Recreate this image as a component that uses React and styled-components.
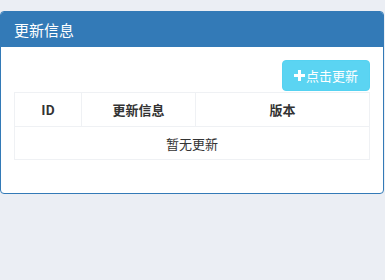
import React from "react";
import styled, { createGlobalStyle } from "styled-components";

const Global = createGlobalStyle`
  html, body { margin: 0; padding: 0; background: #ebeef4; }
  body { font-family: "Liberation Sans", "Noto Sans CJK SC", sans-serif; color: #333; }
`;

const Page = styled.div`
  padding: 11px 1px 0 0;
`;

const Panel = styled.div`
  background: #fff;
  border: 1px solid #337ab7;
  border-radius: 4px;
  overflow: hidden;
`;

const Heading = styled.div`
  background: #337ab7;
  color: #fff;
  height: 35px;
  display: flex;
  align-items: center;
  padding: 0 13px;
  font-size: 15px;
  font-family: "Noto Sans CJK SC", sans-serif;
`;

const Body = styled.div`
  padding: 13px 13px 33px;
  display: flex;
  flex-direction: column;
`;

const Toolbar = styled.div`
  display: flex;
  justify-content: flex-end;
  margin-bottom: 1px;
`;

const Button = styled.button`
  display: flex;
  align-items: center;
  gap: 1px;
  height: 31px;
  width: 88px;
  justify-content: center;
  background: #5bd4f2;
  border: 1px solid #55d2f1;
  border-radius: 4px;
  color: #fff;
  font-size: 13px;
  font-family: "Noto Sans CJK SC", sans-serif;
  padding: 0;
`;

const Table = styled.table`
  width: 100%;
  border-collapse: collapse;
  font-family: "Noto Sans CJK SC", sans-serif;
  font-size: 13px;
`;

const Th = styled.th`
  border: 1px solid #eff1f4;
  height: 33px;
  padding: 0;
  font-weight: bold;
  color: #333;
  text-align: center;
  width: ${(p) => p.$w || "auto"};
`;

const Td = styled.td`
  border: 1px solid #eff1f4;
  height: 32px;
  padding: 0;
  text-align: center;
  color: #333;
`;

const Plus = () => (
  <svg width="11" height="11" viewBox="0 0 11 11">
    <rect x="4" y="0" width="3" height="11" fill="#fff" />
    <rect x="0" y="4" width="11" height="3" fill="#fff" />
  </svg>
);

export default function App() {
  return (
    <>
      <Global />
      <Page>
        <Panel>
          <Heading>更新信息</Heading>
          <Body>
            <Toolbar>
              <Button>
                <Plus />
                点击更新
              </Button>
            </Toolbar>
            <Table>
              <thead>
                <tr>
                  <Th $w="66px">ID</Th>
                  <Th $w="113px">更新信息</Th>
                  <Th>版本</Th>
                </tr>
              </thead>
              <tbody>
                <tr>
                  <Td colSpan={3}>暂无更新</Td>
                </tr>
              </tbody>
            </Table>
          </Body>
        </Panel>
      </Page>
    </>
  );
}
